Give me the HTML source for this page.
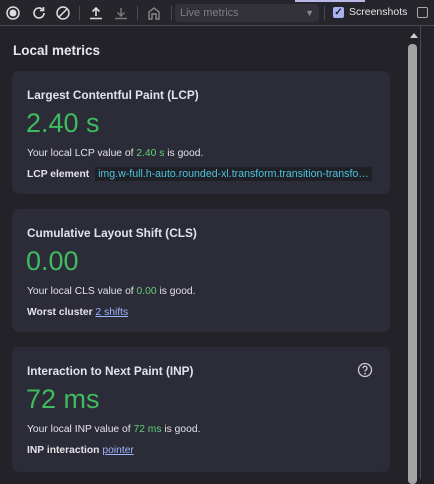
<!DOCTYPE html>
<html><head><style>
body{margin:0;width:434px;height:479px;background:#232228;font-family:"Liberation Sans",sans-serif;overflow:hidden;position:relative;color:#e3e3e8}
.tb{position:absolute;left:0;top:0;width:434px;height:25px;background:#26252b;border-bottom:1px solid #4a4956}
.tabline{position:absolute;left:295px;top:0;width:70px;height:2px;background:#b9b8e8}
.ic{position:absolute;top:5px}
.sep{position:absolute;top:6px;width:1px;height:14px;background:#4a4956}
.sel{position:absolute;left:175px;top:4px;width:144px;height:18px;background:#33323b;border-radius:4px;color:#7d7c88;font-size:11px;line-height:18px;padding-left:5px;box-sizing:border-box}
.h{position:absolute;left:13px;top:43px;font-size:13.5px;font-weight:bold;color:#e6e6ee}
.card{position:absolute;left:12px;width:378px;background:#2c2c38;border-radius:7px}
.t{position:absolute;left:15px;font-size:11.8px;font-weight:bold;color:#e3e3ea}
.v{position:absolute;left:14px;font-size:27px;color:#3fbb5f}
.p{position:absolute;left:15px;font-size:10.3px;color:#e3e3e8;white-space:nowrap}
.b{font-weight:bold}
.g{color:#5fcf7a}
.code{background:#1f1f26;color:#4fc3e0;padding:1px 3px;margin-left:3px;font-size:10.6px}
a{color:#9db4ff;text-decoration:underline}
.sb{position:absolute;left:408px;top:44px;width:9px;height:440px;background:#a3a3a3;border-radius:4px}
</style></head><body>
<div class="tb"><div class="tabline"></div>
<svg class="ic" style="left:5px" width="16" height="16"><circle cx="8" cy="8" r="6" fill="none" stroke="#ddd" stroke-width="1.5"/><circle cx="8" cy="8" r="3.5" fill="#ddd"/></svg>
<svg class="ic" style="left:31px" width="16" height="16"><path d="M13 8a5 5 0 1 1-1.5-3.6" fill="none" stroke="#ddd" stroke-width="1.6"/><path d="M12.5 2v3.5H9" fill="none" stroke="#ddd" stroke-width="1.6"/></svg>
<svg class="ic" style="left:55px" width="16" height="16"><circle cx="8" cy="8" r="6" fill="none" stroke="#ddd" stroke-width="1.5"/><path d="M4 12L12 4" stroke="#ddd" stroke-width="1.5"/></svg>
<div class="sep" style="left:79px"></div>
<svg class="ic" style="left:88px" width="16" height="16"><path d="M8 11V3M4.5 6.5L8 3l3.5 3.5M2 13.5h12" fill="none" stroke="#ddd" stroke-width="1.6"/></svg>
<svg class="ic" style="left:113px" width="16" height="16"><path d="M8 3v8M4.5 7.5L8 11l3.5-3.5M2 13.5h12" fill="none" stroke="#777" stroke-width="1.5"/></svg>
<div class="sep" style="left:137px"></div>
<svg class="ic" style="left:146px" width="16" height="16"><path d="M3 14V7l5-4 5 4v7h-3V9H6v5z" fill="none" stroke="#888" stroke-width="1.4"/></svg>
<div class="sep" style="left:171px"></div>
<div class="sel">Live metrics<span style="position:absolute;right:5px;top:0;font-size:9px;color:#888">▼</span></div>
<div class="sep" style="left:324px"></div>
<div style="position:absolute;left:333px;top:7px;width:11px;height:11px;background:#a8b2f0;border-radius:2px;color:#232228;font-size:10px;line-height:11px;text-align:center;font-weight:bold">✓</div>
<div style="position:absolute;left:349px;top:6px;font-size:10.5px;color:#e3e3e8">Screenshots</div>
<div style="position:absolute;left:417px;top:7px;width:9px;height:9px;border:1.5px solid #aaa;border-radius:2px"></div>
</div>
<div style="position:absolute;left:420px;top:26px;width:1px;height:453px;background:#4a4956"></div>
<div style="position:absolute;left:410px;top:33px;width:0;height:0;border-left:4px solid transparent;border-right:4px solid transparent;border-bottom:5px solid #ccc"></div>
<div class="sb"></div>
<div class="h">Local metrics</div>

<div class="card" style="top:71px;height:123px">
<div class="t" style="top:17px">Largest Contentful Paint (LCP)</div>
<div class="v" style="top:37px">2.40 s</div>
<div class="p" style="top:77px">Your local LCP value of <span class="g">2.40 s</span> is good.</div>
<div class="p" style="top:97px"><span class="b">LCP element</span> <span class="code">img.w-full.h-auto.rounded-xl.transform.transition-transfo…</span></div>
</div>

<div class="card" style="top:209px;height:123px">
<div class="t" style="top:17px">Cumulative Layout Shift (CLS)</div>
<div class="v" style="top:37px">0.00</div>
<div class="p" style="top:77px">Your local CLS value of <span class="g">0.00</span> is good.</div>
<div class="p" style="top:98px"><span class="b">Worst cluster</span> <a>2 shifts</a></div>
</div>

<div class="card" style="top:347px;height:125px">
<div class="t" style="top:17px">Interaction to Next Paint (INP)</div>
<svg style="position:absolute;left:345px;top:15px" width="16" height="16"><circle cx="8" cy="8" r="6.5" fill="none" stroke="#ccc" stroke-width="1.3"/><path d="M6 6.3a2 2 0 1 1 2.8 1.8c-.6.3-.8.7-.8 1.4" fill="none" stroke="#ccc" stroke-width="1.3"/><circle cx="8" cy="11.6" r=".9" fill="#ccc"/></svg>
<div class="v" style="top:37px">72 ms</div>
<div class="p" style="top:77px">Your local INP value of <span class="g">72 ms</span> is good.</div>
<div class="p" style="top:98px"><span class="b">INP interaction</span> <a>pointer</a></div>
</div>
</body></html>
